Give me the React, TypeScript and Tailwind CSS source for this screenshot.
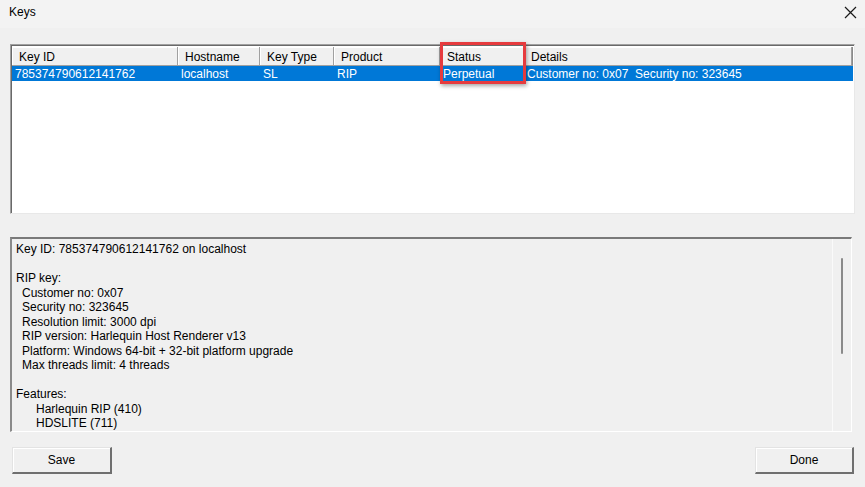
import React from "react";

const cols = [
  { h: "Key ID", v: "785374790612141762", w: 166 },
  { h: "Hostname", v: "localhost", w: 82 },
  { h: "Key Type", v: "SL", w: 74 },
  { h: "Product", v: "RIP", w: 106 },
  { h: "Status", v: "Perpetual", w: 84 },
  { h: "Details", v: "Customer no: 0x07  Security no: 323645", w: 329 },
];

const lines: { t: string; indent: number }[] = [
  { t: "Key ID: 785374790612141762 on localhost", indent: 0 },
  { t: "", indent: 0 },
  { t: "RIP key:", indent: 0 },
  { t: "Customer no: 0x07", indent: 6 },
  { t: "Security no: 323645", indent: 6 },
  { t: "Resolution limit: 3000 dpi", indent: 6 },
  { t: "RIP version: Harlequin Host Renderer v13", indent: 6 },
  { t: "Platform: Windows 64-bit + 32-bit platform upgrade", indent: 6 },
  { t: "Max threads limit: 4 threads", indent: 6 },
  { t: "", indent: 0 },
  { t: "Features:", indent: 0 },
  { t: "Harlequin RIP (410)", indent: 20 },
  { t: "HDSLITE (711)", indent: 20 },
];

function Btn({ label }: { label: string }) {
  return (
    <button className="w-full h-[27px] bg-[#f0f0f0] border-t border-l border-[#e3e3e3] border-r-2 border-b-2 border-r-[#6f6f6f] border-b-[#6f6f6f] shadow-[inset_1px_1px_0_#ffffff] text-[12px] text-black flex items-center justify-center">
      {label}
    </button>
  );
}

export default function App() {
  return (
    <div
      className="w-[865px] h-[487px] bg-[#f0f0f0] flex flex-col text-[12px] text-black overflow-hidden"
      style={{ fontFamily: '"Liberation Sans", Arial, sans-serif' }}
    >
      {/* Title bar */}
      <div className="h-[28px] bg-[#f3f3f3] flex items-center justify-between pl-[9px] pr-[8px] shrink-0">
        <span className="text-[12px] -mt-[4px]">Keys</span>
        <svg width="13" height="13" viewBox="0 0 13 13" className="-mt-[4px]">
          <path d="M1 1 L12 12 M12 1 L1 12" stroke="#1a1a1a" strokeWidth="1.2" />
        </svg>
      </div>

      <div className="flex flex-col pl-[10px] pr-[10px] pt-[16px]">
        {/* List view */}
        <div className="relative h-[170px] w-[845px] bg-white border-t border-l border-[#a0a0a0] border-r border-b border-r-[#e8e8e8] border-b-[#e8e8e8] shadow-[inset_1px_1px_0_#696969] pl-[1px] pt-[2px]">
          <div className="flex h-[19px] border-b border-[#a0a0a0] bg-[#f0f0f0] mr-[1px] border-r border-r-[#8a8a8a]">
            {cols.map((c, i) => (
              <div
                key={i}
                className="h-full border-r border-[#a0a0a0] shadow-[inset_1px_1px_0_#ffffff] flex items-center pl-[7px] pt-[2px] whitespace-nowrap overflow-hidden"
                style={{ width: i === cols.length - 1 ? undefined : c.w, flex: i === cols.length - 1 ? 1 : undefined }}
              >
                {c.h}
              </div>
            ))}
          </div>
          <div className="flex h-[15px] bg-[#0078d7] text-white mr-[1px]">
            {cols.map((c, i) => (
              <div
                key={i}
                className="h-full flex items-center pl-[3px] pt-[1px] whitespace-pre overflow-hidden"
                style={{ width: i === cols.length - 1 ? undefined : c.w, flex: i === cols.length - 1 ? 1 : undefined }}
              >
                {c.v}
              </div>
            ))}
          </div>
          {/* highlight box */}
          <div className="absolute left-[429px] top-[-3px] w-[86px] h-[42px] border-[3px] border-[#e63b3e] shadow-[1px_2px_4px_rgba(0,0,0,0.35)] pointer-events-none" />
        </div>

        {/* Details text area */}
        <div className="mt-[23px] h-[195px] w-[842px] flex bg-[#f0f0f0] border-t-2 border-l-2 border-t-[#7a7a7a] border-l-[#8a8a8a] border-r border-b border-r-[#ffffff] border-b-[#ffffff]">
          <div className="flex-1 pl-[4px] pt-[3px] leading-[14.5px] whitespace-pre">
            {lines.map((l, i) => (
              <div key={i} className="h-[14.5px]" style={{ paddingLeft: l.indent }}>
                {l.t}
              </div>
            ))}
          </div>
          <div className="w-[19px] h-full border-l border-[#fafafa] bg-[#f0f0f0] flex justify-center pt-[19px]">
            <div className="w-[2px] h-[96px] bg-[#8a8a8a] rounded-[1px]" />
          </div>
        </div>

        {/* Buttons */}
        <div className="mt-[15px] flex justify-between pl-[2px] pr-[1px]">
          <div className="w-[100px]"><Btn label="Save" /></div>
          <div className="w-[99px]"><Btn label="Done" /></div>
        </div>
      </div>
    </div>
  );
}
